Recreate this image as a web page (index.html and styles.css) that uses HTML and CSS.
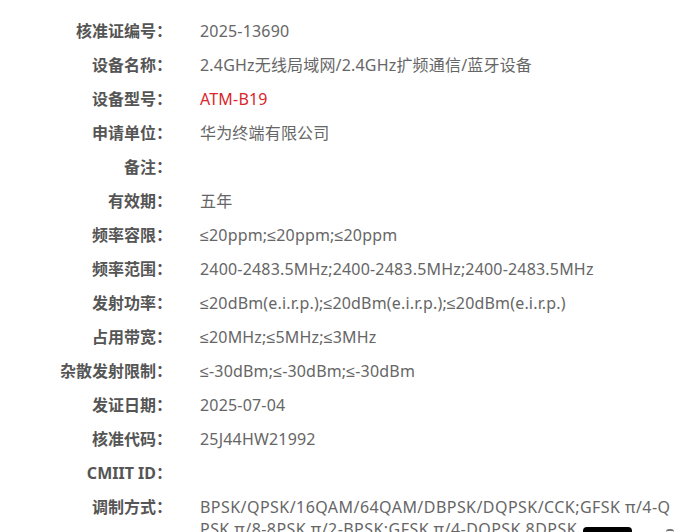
FILE: index.html
```html
<!DOCTYPE html>
<html lang="zh-CN">
<head>
<meta charset="utf-8">
<title>核准证信息</title>
<link rel="stylesheet" href="styles.css">
</head>
<body>
<div class="info">
  <div class="row"><div class="label">核准证编号：</div><div class="value">2025-13690</div></div>
  <div class="row"><div class="label">设备名称：</div><div class="value">2.4GHz无线局域网/2.4GHz扩频通信/蓝牙设备</div></div>
  <div class="row"><div class="label">设备型号：</div><div class="value red">ATM-B19</div></div>
  <div class="row"><div class="label">申请单位：</div><div class="value">华为终端有限公司</div></div>
  <div class="row"><div class="label">备注：</div><div class="value"></div></div>
  <div class="row"><div class="label">有效期：</div><div class="value">五年</div></div>
  <div class="row"><div class="label">频率容限：</div><div class="value">≤20ppm;≤20ppm;≤20ppm</div></div>
  <div class="row"><div class="label">频率范围：</div><div class="value">2400-2483.5MHz;2400-2483.5MHz;2400-2483.5MHz</div></div>
  <div class="row"><div class="label">发射功率：</div><div class="value">≤20dBm(e.i.r.p.);≤20dBm(e.i.r.p.);≤20dBm(e.i.r.p.)</div></div>
  <div class="row"><div class="label">占用带宽：</div><div class="value">≤20MHz;≤5MHz;≤3MHz</div></div>
  <div class="row"><div class="label">杂散发射限制：</div><div class="value">≤-30dBm;≤-30dBm;≤-30dBm</div></div>
  <div class="row"><div class="label">发证日期：</div><div class="value">2025-07-04</div></div>
  <div class="row"><div class="label">核准代码：</div><div class="value">25J44HW21992</div></div>
  <div class="row"><div class="label">CMIIT ID：</div><div class="value"></div></div>
  <div class="row"><div class="label">调制方式：</div><div class="value wrap">BPSK/QPSK/16QAM/64QAM/DBPSK/DQPSK/CCK;GFSK π/4-QPSK π/8-8PSK π/2-BPSK;GFSK π/4-DQPSK 8DPSK</div></div>
</div>
<div class="float-bar"></div>
<div class="float-mark"></div>
</body>
</html>
```

FILE: styles.css
```css
html, body {
  margin: 0;
  padding: 0;
  background: #ffffff;
}
body {
  font-family: "Noto Sans", "Liberation Sans", "Noto Sans CJK SC", sans-serif;
  font-size: 16px;
  color: #666666;
  overflow: hidden;
  height: 532px;
  position: relative;
}
.info {
  padding-top: 14px;
}
.row {
  display: grid;
  grid-template-columns: 172px 474px;
  column-gap: 28px;
  padding: 6px 0;
  line-height: 22px;
}
.label {
  text-align: right;
  font-weight: 700;
  color: #555555;
  white-space: nowrap;
}
.value {
  min-height: 22px;
  color: #666666;
  letter-spacing: 0.18px;
}
.red {
  color: #d9262c;
}
.wrap {
  word-break: break-all;
  line-height: 22px;
  letter-spacing: 0.45px;
}
.float-bar {
  position: absolute;
  left: 583px;
  top: 527px;
  width: 49px;
  height: 12px;
  background: #000000;
  border-radius: 4px;
}
.float-mark {
  position: absolute;
  left: 666px;
  top: 529px;
  width: 8px;
  height: 4px;
  border-top: 2px solid #777777;
  border-radius: 3px 3px 0 0;
}
```
